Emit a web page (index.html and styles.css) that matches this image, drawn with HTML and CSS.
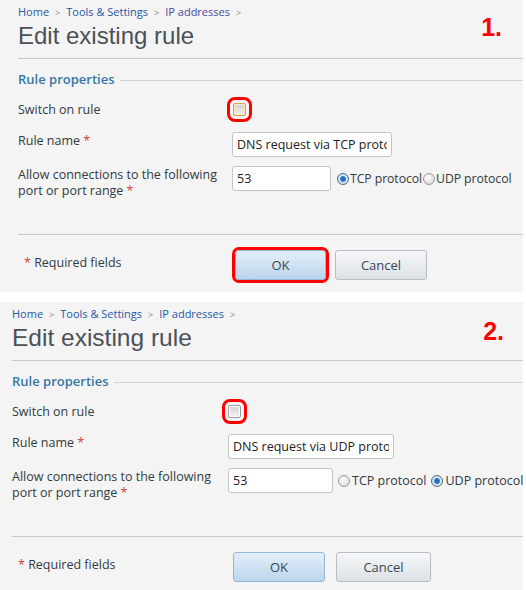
FILE: index.html
```html
<!DOCTYPE html>
<html>
<head>
<meta charset="utf-8">
<link rel="stylesheet" href="styles.css">
</head>
<body>
<div class="panel p1">
  <div class="num">1.</div>
  <div class="crumbs"><a class="lnk">Home</a><span class="sep">&gt;</span><a class="lnk">Tools &amp; Settings</a><span class="sep">&gt;</span><a class="lnk visited">IP addresses</a><span class="sep">&gt;</span></div>
  <h1 class="title">Edit existing rule</h1>
  <div class="rule-line"></div>
  <div class="legend"><span class="legend-text">Rule properties</span><span class="legend-line"></span></div>
  <div class="row row-switch">
    <div class="label">Switch on rule</div>
    <div class="field"><span class="check hover hl"></span></div>
  </div>
  <div class="row row-name">
    <div class="label">Rule name <span class="req">*</span></div>
    <div class="field"><input class="txt name" type="text" value="DNS request via TCP protocol"></div>
  </div>
  <div class="row row-port">
    <div class="label two">Allow connections to the following<br>port or port range <span class="req">*</span></div>
    <div class="field"><input class="txt port" type="text" value="53"><span class="radio first on"></span><span class="rlabel">TCP protocol</span><span class="radio"></span><span class="rlabel">UDP protocol</span></div>
  </div>
  <div class="foot-line"></div>
  <div class="footer">
    <div class="reqnote"><span class="req">*</span> Required fields</div>
    <div class="buttons"><button class="btn ok hl-btn">OK</button><button class="btn cancel">Cancel</button></div>
  </div>
</div>
<div class="gap"></div>
<div class="panel p2">
  <div class="num">2.</div>
  <div class="crumbs"><a class="lnk">Home</a><span class="sep">&gt;</span><a class="lnk">Tools &amp; Settings</a><span class="sep">&gt;</span><a class="lnk">IP addresses</a><span class="sep">&gt;</span></div>
  <h1 class="title">Edit existing rule</h1>
  <div class="rule-line"></div>
  <div class="legend"><span class="legend-text">Rule properties</span><span class="legend-line"></span></div>
  <div class="row row-switch">
    <div class="label">Switch on rule</div>
    <div class="field"><span class="check hl"></span></div>
  </div>
  <div class="row row-name">
    <div class="label">Rule name <span class="req">*</span></div>
    <div class="field"><input class="txt name" type="text" value="DNS request via UDP protocol"></div>
  </div>
  <div class="row row-port">
    <div class="label two">Allow connections to the following<br>port or port range <span class="req">*</span></div>
    <div class="field"><input class="txt port" type="text" value="53"><span class="radio first"></span><span class="rlabel">TCP protocol</span><span class="radio on"></span><span class="rlabel">UDP protocol</span></div>
  </div>
  <div class="foot-line"></div>
  <div class="footer">
    <div class="reqnote"><span class="req">*</span> Required fields</div>
    <div class="buttons"><button class="btn ok">OK</button><button class="btn cancel">Cancel</button></div>
  </div>
</div>
</body>
</html>
```

FILE: styles.css
```css
html, body {
  margin: 0;
  padding: 0;
  background: #ffffff;
}
body {
  width: 526px;
  height: 590px;
  overflow: hidden;
  font-family: "Open Sans", "Noto Sans", sans-serif;
  font-size: 12.5px;
  color: #333a40;
}
.panel {
  position: relative;
  width: 523px;
  height: 292px;
  box-sizing: border-box;
  background: #f4f4f4;
  padding-left: 18px;
}
.p2 {
  height: 288px;
  padding-left: 12px;
}
.gap {
  height: 10px;
}
.num {
  position: absolute;
  right: 21px;
  top: 13px;
  font-family: "Liberation Sans", Arial, sans-serif;
  font-weight: bold;
  font-size: 25px;
  color: #ff0000;
}
.p2 .num {
  top: 15px;
  right: 19px;
}
.crumbs {
  padding-top: 5px;
  font-size: 11px;
  line-height: 14px;
}
.lnk {
  color: #2558a5;
}
.lnk.visited {
  color: #4a4aa2;
}
.sep {
  color: #8a8a8a;
  font-size: 9px;
  margin: 0 6px;
}
.title {
  margin: 2px 0 0;
  font-family: "Liberation Sans", Arial, sans-serif;
  font-weight: normal;
  font-size: 24px;
  line-height: 28px;
  color: #4b5157;
}
.p2 .title {
  font-size: 24.5px;
}
.rule-line {
  margin-top: 8px;
  border-top: 1px solid #c9c9c9;
}
.legend {
  display: flex;
  align-items: center;
  margin-top: 11px;
  height: 18px;
}
.legend-text {
  font-weight: 600;
  font-size: 13px;
  color: #3577a3;
  padding-right: 6px;
}
.legend-line {
  flex: 1;
  border-top: 1px solid #d3d3d3;
  margin-top: 2px;
}
.row {
  display: grid;
  grid-template-columns: 214px 1fr;
  align-items: start;
}
.p2 .row {
  grid-template-columns: 216px 1fr;
}
.label {
  line-height: 18px;
}
.label.two {
  line-height: 16px;
  padding-top: 1px;
  white-space: nowrap;
}
.req {
  color: #d2403a;
}
.row-switch {
  margin-top: 13px;
}
.row-name {
  margin-top: 13px;
}
.row-port {
  margin-top: 9px;
}
.field {
  display: flex;
  align-items: center;
  white-space: nowrap;
}
.check {
  display: block;
  width: 11px;
  height: 11px;
  margin: 2px 0 0 1px;
  border: 1px solid #9d9d9d;
  border-radius: 1px;
  background: linear-gradient(#d2d2d2, #f2f2f2);
  box-shadow: inset 0 0 0 1px #ffffff;
}
.check.hover {
  border-color: #d9a055;
  box-shadow: inset 0 0 0 1px #fbe9c8;
}
.check.hl {
  outline: 3px solid #ff0000;
  outline-offset: 3px;
  border-radius: 2px;
}
.p2 .check {
  margin-left: 0;
}
.txt {
  box-sizing: border-box;
  flex-shrink: 0;
  height: 25px;
  border: 1px solid #c4c4c4;
  border-radius: 3px;
  background: #ffffff;
  padding: 0 4px;
  font-family: "Open Sans", "Noto Sans", sans-serif;
  font-size: 12.5px;
  color: #222;
  margin: 0;
}
.txt.name {
  width: 160px;
}
.txt.port {
  width: 99px;
}
.p2 .txt.name {
  width: 166px;
}
.p2 .txt.port {
  width: 105px;
}
.radio {
  display: inline-block;
  flex-shrink: 0;
  box-sizing: border-box;
  width: 12px;
  height: 12px;
  border-radius: 50%;
  border: 1px solid #9a9a9a;
  background: radial-gradient(circle at 40% 35%, #ffffff, #d0d0d0);
  margin: 0 1px 0 1px;
}
.radio.first {
  margin-left: 6px;
}
.radio.on {
  border-color: #4d6a86;
  background: radial-gradient(circle, #1e64b4 0, #2f7ccf 2.5px, #dfe8f2 3.5px, #c7d2de 6px);
}
.rlabel {
  font-size: 12.3px;
  letter-spacing: -0.1px;
  flex-shrink: 0;
}
.p2 .rlabel {
  font-size: 12.5px;
  letter-spacing: 0;
}
.p2 .radio {
  margin-right: 2px;
}
.p2 .radio.first {
  margin-left: 5px;
}
.p2 .radio.on {
  margin-left: 5px;
}
.foot-line {
  margin-top: 35px;
  border-top: 1px solid #c9c9c9;
}
.footer {
  display: flex;
  align-items: flex-start;
  padding-top: 15px;
}
.reqnote {
  width: 217px;
  padding-left: 6px;
  box-sizing: border-box;
  line-height: 18px;
  padding-top: 4px;
}
.p2 .reqnote {
  width: 221px;
}
.buttons {
  display: flex;
  gap: 9px;
}
.p2 .buttons {
  gap: 11px;
}
.btn {
  box-sizing: border-box;
  height: 30px;
  border-radius: 3px;
  font-family: "Open Sans", "Noto Sans", sans-serif;
  font-size: 13px;
  color: #3a4654;
  padding: 0;
  margin: 0;
}
.btn.ok {
  width: 91px;
  border: 1px solid #94b7d8;
  background: linear-gradient(#e3effa, #bcd5ec);
}
.btn.cancel {
  width: 92px;
  border: 1px solid #b6bec6;
  background: linear-gradient(#f6f7f8, #dce1e5);
}
.p2 .btn.ok {
  width: 92px;
}
.p2 .btn.cancel {
  width: 95px;
}
.hl-btn {
  outline: 3px solid #ff0000;
  outline-offset: 0;
  border-radius: 4px;
}
```
